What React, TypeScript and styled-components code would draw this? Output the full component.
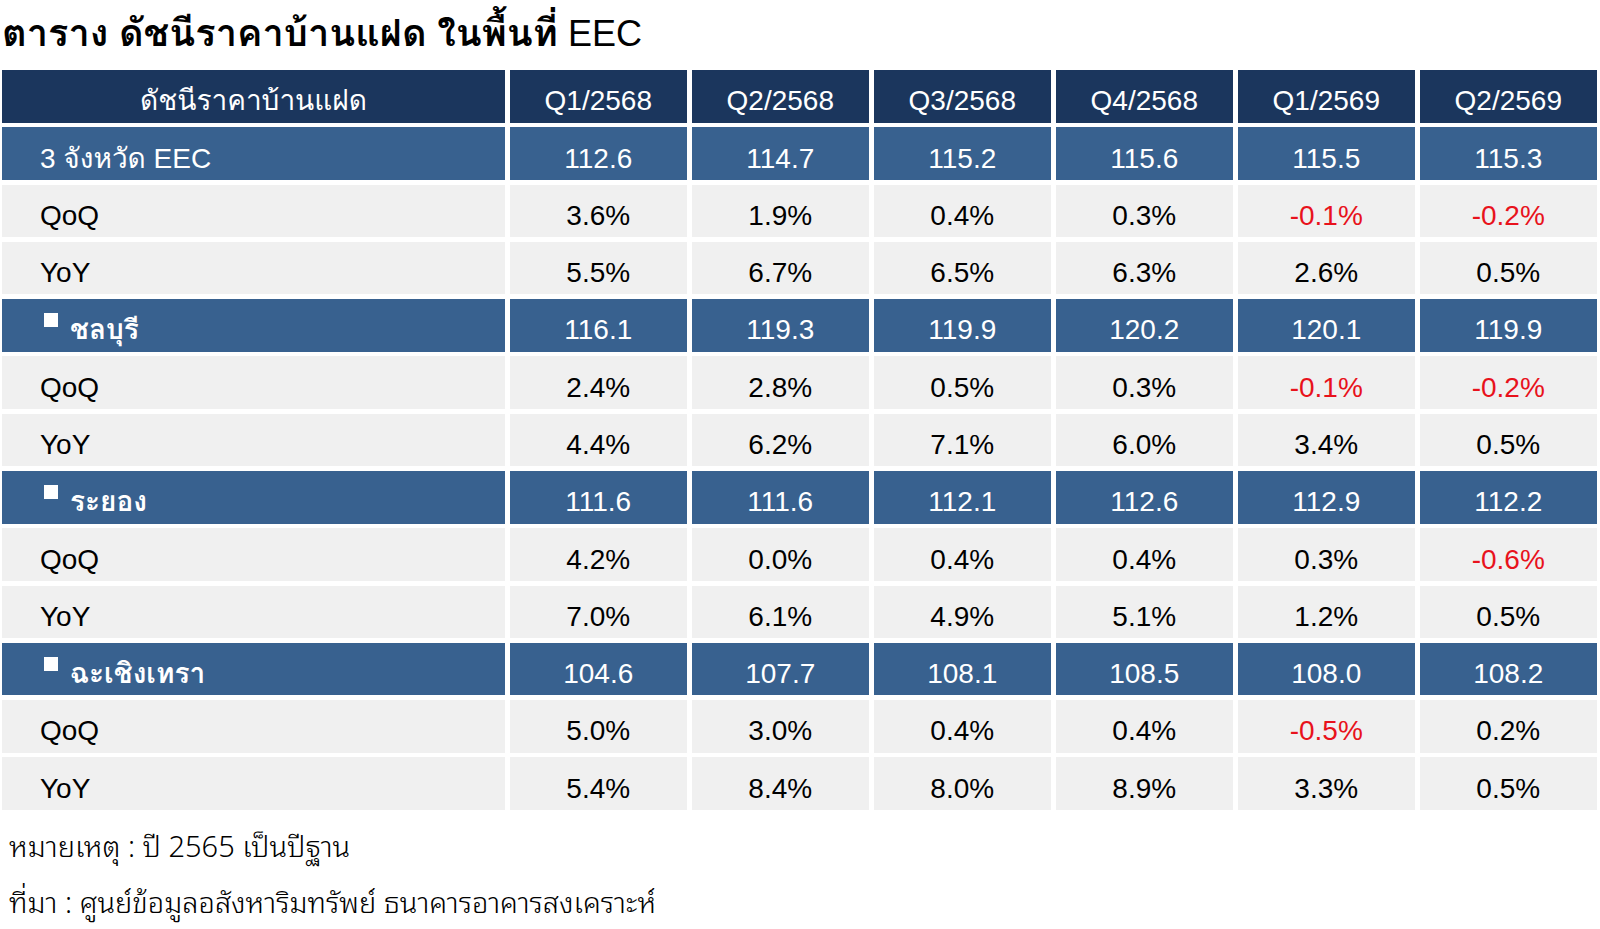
import React from "react";
import styled, { createGlobalStyle } from "styled-components";

const GlobalStyle = createGlobalStyle`
  html, body {
    margin: 0;
    padding: 0;
    background: #ffffff;
  }
  body {
    font-family: "Liberation Sans", "Loma", "Noto Sans Thai Looped", sans-serif;
    color: #000000;
  }
`;

type Kind = "head" | "region" | "stat";

interface Row {
  label: string;
  kind: Kind;
  bullet?: boolean;
  values: string[];
}

const quarters = ["Q1/2568", "Q2/2568", "Q3/2568", "Q4/2568", "Q1/2569", "Q2/2569"];

const rows: Row[] = [
  { label: "3 จังหวัด EEC", kind: "region", values: ["112.6", "114.7", "115.2", "115.6", "115.5", "115.3"] },
  { label: "QoQ", kind: "stat", values: ["3.6%", "1.9%", "0.4%", "0.3%", "-0.1%", "-0.2%"] },
  { label: "YoY", kind: "stat", values: ["5.5%", "6.7%", "6.5%", "6.3%", "2.6%", "0.5%"] },
  { label: "ชลบุรี", kind: "region", bullet: true, values: ["116.1", "119.3", "119.9", "120.2", "120.1", "119.9"] },
  { label: "QoQ", kind: "stat", values: ["2.4%", "2.8%", "0.5%", "0.3%", "-0.1%", "-0.2%"] },
  { label: "YoY", kind: "stat", values: ["4.4%", "6.2%", "7.1%", "6.0%", "3.4%", "0.5%"] },
  { label: "ระยอง", kind: "region", bullet: true, values: ["111.6", "111.6", "112.1", "112.6", "112.9", "112.2"] },
  { label: "QoQ", kind: "stat", values: ["4.2%", "0.0%", "0.4%", "0.4%", "0.3%", "-0.6%"] },
  { label: "YoY", kind: "stat", values: ["7.0%", "6.1%", "4.9%", "5.1%", "1.2%", "0.5%"] },
  { label: "ฉะเชิงเทรา", kind: "region", bullet: true, values: ["104.6", "107.7", "108.1", "108.5", "108.0", "108.2"] },
  { label: "QoQ", kind: "stat", values: ["5.0%", "3.0%", "0.4%", "0.4%", "-0.5%", "0.2%"] },
  { label: "YoY", kind: "stat", values: ["5.4%", "8.4%", "8.0%", "8.9%", "3.3%", "0.5%"] },
];

const Page = styled.div`
  width: 1600px;
  height: 929px;
  overflow: hidden;
  display: flex;
  flex-direction: column;
`;

const Title = styled.h1`
  margin: 0;
  height: 70px;
  padding: 10px 0 0 2px;
  box-sizing: border-box;
  font-size: 36px;
  font-weight: 400;
  line-height: 46px;
  color: #000;
  white-space: nowrap;
`;

const ThaiBold = styled.span`
  font-weight: 700;
  font-size: 38px;
`;

const Table = styled.div`
  display: grid;
  grid-template-columns: 503px repeat(6, 177.5px);
  grid-auto-rows: 52.6px;
  column-gap: 4.5px;
  row-gap: 4.7px;
  margin-left: 2px;
`;

const bg: Record<Kind, string> = {
  head: "#1b365d",
  region: "#38618f",
  stat: "#f0f0f0",
};

const Cell = styled.div<{ $kind: Kind; $first?: boolean; $neg?: boolean }>`
  background: ${(p) => bg[p.$kind]};
  color: ${(p) => (p.$neg ? "#e8121c" : p.$kind === "stat" ? "#000000" : "#ffffff")};
  display: flex;
  align-items: center;
  justify-content: ${(p) => (p.$first && p.$kind !== "head" ? "flex-start" : "center")};
  padding: 10px 0 0 ${(p) => (p.$first && p.$kind !== "head" ? "38px" : "0")};
  box-sizing: border-box;
  font-size: 28px;
  line-height: 1;
  white-space: nowrap;
`;

const Bullet = styled.span`
  width: 14px;
  height: 14px;
  background: #ffffff;
  align-self: flex-start;
  margin: 4px 12px 0 4px;
  flex: none;
`;

const RegionName = styled.span`
  font-weight: 700;
`;

const Notes = styled.div`
  padding: 15px 0 0 9px;
  display: flex;
  flex-direction: column;
  gap: 17px;
  font-family: "Noto Sans Thai Looped", "Liberation Sans Narrow", "Liberation Sans", sans-serif;
  font-weight: 300;
  font-size: 29px;
  line-height: 39px;
`;

export default function App() {
  return (
    <Page>
      <GlobalStyle />
      <Title>
        <ThaiBold>ตาราง ดัชนีราคาบ้านแฝด ในพื้นที่</ThaiBold> EEC
      </Title>
      <Table>
        <Cell $kind="head" $first>
          ดัชนีราคาบ้านแฝด
        </Cell>
        {quarters.map((q) => (
          <Cell key={q} $kind="head">
            {q}
          </Cell>
        ))}
        {rows.map((row, i) => (
          <React.Fragment key={i}>
            <Cell $kind={row.kind} $first>
              {row.bullet && <Bullet />}
              {row.bullet ? <RegionName>{row.label}</RegionName> : row.label}
            </Cell>
            {row.values.map((v, j) => (
              <Cell key={j} $kind={row.kind} $neg={v.startsWith("-")}>
                {v}
              </Cell>
            ))}
          </React.Fragment>
        ))}
      </Table>
      <Notes>
        <div>หมายเหตุ : ปี 2565 เป็นปีฐาน</div>
        <div>ที่มา : ศูนย์ข้อมูลอสังหาริมทรัพย์ ธนาคารอาคารสงเคราะห์</div>
      </Notes>
    </Page>
  );
}
